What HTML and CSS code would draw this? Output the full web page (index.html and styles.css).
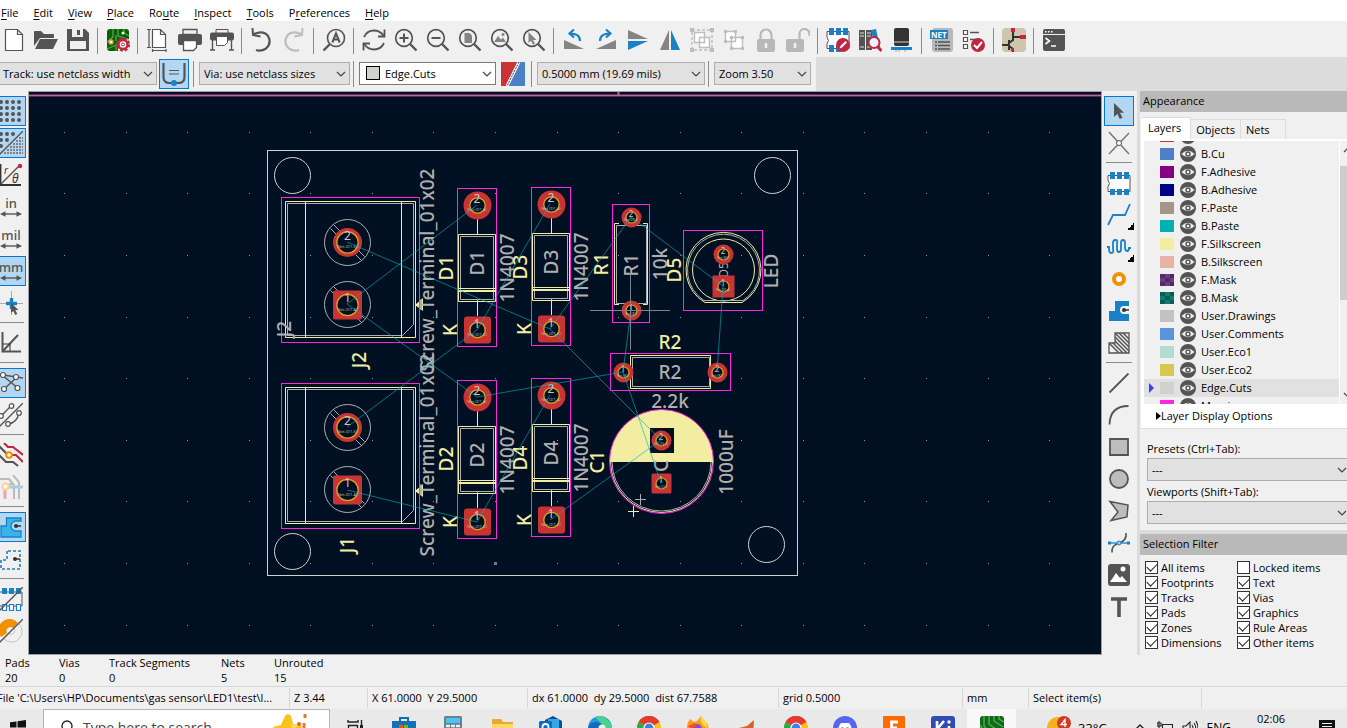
FILE: index.html
```html
<!DOCTYPE html>
<html lang="en">
<head>
<meta charset="utf-8">
<title>PCB Editor</title>
<link rel="stylesheet" href="styles.css">
</head>
<body>
<svg class="defs" aria-hidden="true">
  <defs>
    <symbol id="chev" viewBox="0 0 10 6"><path d="M1 1l4 4 4-4" fill="none" stroke="#444" stroke-width="1.2"/></symbol>
    <symbol id="lens" viewBox="0 0 24 24"><circle cx="10" cy="10" r="8.3" fill="none" stroke="#545454" stroke-width="1.7"/><path d="M16 16l6.500 6.500" stroke="#545454" stroke-width="2.400"/></symbol>
    <symbol id="eye" viewBox="0 0 16 16"><circle cx="8" cy="8" r="8" fill="#545454"/><path d="M1.500 8Q8 1.500 14.500 8Q8 14.500 1.500 8z" fill="#f0f0f0"/><circle cx="8" cy="8" r="2.700" fill="#545454"/><circle cx="8" cy="8" r="1.300" fill="#f0f0f0"/></symbol>
    <symbol id="chrome" viewBox="0 0 24 24"><circle cx="12" cy="12" r="12" fill="#fbc116"/><path d="M12 12L1.600 6A12 12 0 0 1 22.400 6z" fill="#e33b2e"/><path d="M12 12L1.600 6A12 12 0 0 0 12 24z" fill="#2da94f"/><path d="M1.600 6A12 12 0 0 1 22.400 6L12 7z" fill="#e33b2e"/><circle cx="12" cy="12" r="5.600" fill="#fff"/><circle cx="12" cy="12" r="4.400" fill="#3f7de8"/></symbol>
  </defs>
</svg>

<nav class="menubar">
  <button><u>F</u>ile</button><button><u>E</u>dit</button><button><u>V</u>iew</button><button><u>P</u>lace</button><button>Ro<u>u</u>te</button><button><u>I</u>nspect</button><button><u>T</u>ools</button><button>P<u>r</u>eferences</button><button><u>H</u>elp</button>
</nav>

<div class="toolbar">
  <button class="tool" aria-label="New"><svg viewBox="0 0 24 24"><path d="M3.500 1.500h12l5 5v16h-17zM15.500 1.500v5h5" fill="#fff" stroke="#545454" stroke-width="1.200"/></svg></button>
  <button class="tool" aria-label="Open"><svg viewBox="0 0 24 24"><path d="M0 18V4q0-1 1-1h6l3 3h9q1 0 1 1v3H6z" fill="#545454"/><path d="M6 11h18l-5 10H1z" fill="#545454"/></svg></button>
  <button class="tool" aria-label="Save"><svg viewBox="0 0 24 24"><path d="M1 1h18l4 4v18H1z" fill="#545454"/><path d="M6 1h11v8H6zM4 13h16v8H4z" fill="#f0f0f0"/><path d="M11 2h3v5h-3z" fill="#545454"/></svg></button>
  <i class="sep"></i>
  <button class="tool" aria-label="Board setup"><svg viewBox="0 0 24 24"><rect x="1" y="1" width="22" height="22" rx="3" fill="#016301"/><path d="M7 1v8L1 14M12 1v7l10 3M18 1v4l5 3M1 21l9-4v6M10 13V7" stroke="#5aa05a" stroke-width="1.300" fill="none"/><circle cx="5" cy="14" r="2" fill="#fff" stroke="#f0a020" stroke-width="1.300"/><circle cx="17" cy="5" r="1.500" fill="#fff"/><path d="M12 23V13l11-2v12z" fill="#d8e8d8"/><circle cx="17" cy="16.500" r="4.500" fill="#fff" stroke="#bf2641" stroke-width="2.500"/><circle cx="17" cy="16.500" r="6" fill="none" stroke="#bf2641" stroke-width="2.400" stroke-dasharray="2.700 2"/><circle cx="17" cy="16.500" r="1.500" fill="none" stroke="#bf2641"/></svg></button>
  <i class="sep"></i>
  <button class="tool" aria-label="Page settings"><svg viewBox="0 0 24 24"><path d="M6.500 1.500h8l5 5v13h-13zM14.500 1.500v5h5" fill="#fff" stroke="#545454" stroke-width="1.200"/><path d="M1 1.500h4M1 19.500h4M3 1.500v18M6 22.500h14M6.500 21v3M20 21v3" stroke="#545454" stroke-width="1.200"/></svg></button>
  <button class="tool" aria-label="Print"><svg viewBox="0 0 24 24"><path d="M5 1.500h14v5H5z" fill="#f0f0f0" stroke="#545454" stroke-width="1.300"/><rect y="6" width="24" height="11" rx="2" fill="#545454"/><path d="M5.500 12.500h13v7l-3 3h-10z" fill="#fff" stroke="#545454" stroke-width="1.300"/></svg></button>
  <button class="tool" aria-label="Plot"><svg viewBox="0 0 24 24"><path d="M6 1.500h12v4H6z" fill="#f0f0f0" stroke="#545454"/><rect y="4.500" width="24" height="8" rx="2" fill="#545454"/><path d="M6.500 8.500h11v6l-3 3h-8z" fill="#fff" stroke="#545454"/><path d="M2.500 12v10M21.500 12v10M0 22h5M19 22h5" stroke="#545454" stroke-width="1.400"/></svg></button>
  <i class="sep"></i>
  <button class="tool" aria-label="Undo"><svg viewBox="0 0 24 24"><path d="M3 6.500q10-5 15 1.500q4 7-2 12.500q-5 3.500-10 1.500" fill="none" stroke="#545454" stroke-width="2.200"/><path d="M2.500 0l.5 7 7.500 1.500" fill="none" stroke="#545454" stroke-width="2"/></svg></button>
  <button class="tool" aria-label="Redo"><svg viewBox="0 0 24 24"><path d="M20 6.500Q10 1.500 5 8q-4 7 2 12.500q5 3.500 10 1.500" fill="none" stroke="#bdbdbd" stroke-width="2.200"/><path d="M20.500 0l-.5 7-7.500 1.500" fill="none" stroke="#bdbdbd" stroke-width="2"/></svg></button>
  <i class="sep"></i>
  <button class="tool" aria-label="Find"><svg viewBox="0 0 24 24"><circle cx="14" cy="10" r="8.500" fill="none" stroke="#545454" stroke-width="1.600"/><path d="M8 16l-6.500 6.500" stroke="#545454" stroke-width="2.400"/><path d="M10.300 14.500l3.700-9 3.700 9M11.500 11.500h5" stroke="#545454" stroke-width="2" fill="none"/></svg></button>
  <i class="sep"></i>
  <button class="tool" aria-label="Refresh"><svg viewBox="0 0 24 24"><path d="M2 9Q5 2.500 12 2.500q6 0 10 5.500M22 15q-3 6.500-10 6.500q-6 0-10-5.500" fill="none" stroke="#545454" stroke-width="1.800"/><path d="M22.500 1.500V8.500H16M1.500 22.500V15.500H8" fill="none" stroke="#545454" stroke-width="1.800"/></svg></button>
  <button class="tool" aria-label="Zoom in"><svg viewBox="0 0 24 24"><use href="#lens"/><path d="M10 5.500v9M5.500 10h9" stroke="#545454" stroke-width="2"/></svg></button>
  <button class="tool" aria-label="Zoom out"><svg viewBox="0 0 24 24"><use href="#lens"/><path d="M5.500 10h9" stroke="#545454" stroke-width="2"/></svg></button>
  <button class="tool" aria-label="Zoom page"><svg viewBox="0 0 24 24"><use href="#lens"/><path d="M6.500 5h5l2.500 2.500V15H6.500z" fill="#848484"/></svg></button>
  <button class="tool" aria-label="Zoom objects"><svg viewBox="0 0 24 24"><use href="#lens"/><path d="M4 14l4-6 3 3.500 2-2 3 4.500z" fill="#848484"/><circle cx="13" cy="6.500" r="1.500" fill="#848484"/></svg></button>
  <button class="tool" aria-label="Zoom selection"><svg viewBox="0 0 24 24"><use href="#lens"/><path d="M6.500 4v11l2.500-2.300 2 4 2-1-2-3.700h3.500z" fill="#848484"/></svg></button>
  <i class="sep"></i>
  <button class="tool" aria-label="Rotate counterclockwise"><svg viewBox="0 0 24 24"><path d="M2 12l20 9H2z" fill="#848484"/><path d="M18 13q0-7.500-10-7.500M12 1.500L7.500 5.500l4.500 4" fill="none" stroke="#1a81c4" stroke-width="2.200"/></svg></button>
  <button class="tool" aria-label="Rotate clockwise"><svg viewBox="0 0 24 24"><path d="M22 12L2 21h20z" fill="#848484"/><path d="M6 13q0-7.500 10-7.500M12 1.500l4.500 4-4.500 4" fill="none" stroke="#1a81c4" stroke-width="2.200"/></svg></button>
  <button class="tool" aria-label="Flip vertically"><svg viewBox="0 0 24 24"><path d="M2 2l20 9H2z" fill="#848484"/><path d="M2 22l20-9H2z" fill="#1a81c4"/></svg></button>
  <button class="tool" aria-label="Flip horizontally"><svg viewBox="0 0 24 24"><path d="M2 22L11 2v20z" fill="#848484"/><path d="M22 22L13 2v20z" fill="#1a81c4"/></svg></button>
  <button class="tool" aria-label="Group"><svg viewBox="0 0 24 24"><path d="M2 2h20v20H2z" fill="none" stroke="#bdbdbd" stroke-width="1.400" stroke-dasharray="3 2"/><path d="M4.500 4.500h10v10h-10zM9.500 9.500h10v10h-10z" fill="#fff" stroke="#bdbdbd" stroke-width="1.400"/><path d="M0 0h4v4H0zM20 0h4v4h-4zM0 20h4v4H0zM20 20h4v4h-4z" fill="#bdbdbd"/></svg></button>
  <button class="tool" aria-label="Ungroup"><svg viewBox="0 0 24 24"><path d="M3.500 3.500h10v10h-10zM9.500 9.500h11v11h-11z" fill="#fff" stroke="#bdbdbd" stroke-width="1.400"/><path d="M2 2h3v3H2zM12 2h3v3h-3zM2 12h3v3H2zM8 8h3v3H8zM19 8h3v3h-3zM8 19h3v3H8zM19 19h3v3h-3z" fill="#bdbdbd"/></svg></button>
  <button class="tool" aria-label="Lock"><svg viewBox="0 0 24 24"><rect x="3" y="11" width="18" height="13" rx="2" fill="#b8b8b8"/><path d="M6.500 11V7a5.500 5.500 0 0 1 11 0v4" fill="none" stroke="#b8b8b8" stroke-width="2.200"/><path d="M12 15v5" stroke="#f0f0f0" stroke-width="2.500"/></svg></button>
  <button class="tool" aria-label="Unlock"><svg viewBox="0 0 24 24"><rect x="0" y="11" width="18" height="13" rx="2" fill="#b8b8b8"/><path d="M13.500 11V6a5 5 0 0 1 10 0v2" fill="none" stroke="#b8b8b8" stroke-width="2.200"/><path d="M9 15v5" stroke="#f0f0f0" stroke-width="2.500"/></svg></button>
  <i class="sep"></i>
  <button class="tool" aria-label="Footprint editor"><svg viewBox="0 0 24 24"><path d="M1 3.500h22v17H1v-5q3-3 0-6z" fill="#fff" stroke="#545454"/><path d="M3 0h5v7H3zM10 0h5v7h-5zM17 0h5v7h-5zM3 17h5v7H3zM10 17h5v7h-5z" fill="#1a81c4"/><circle cx="17" cy="17" r="7" fill="#bf2641"/><path d="M13.500 20.500l1-2.500 5-5 1.500 1.500-5 5z" fill="#fff"/></svg></button>
  <button class="tool" aria-label="Footprint libraries"><svg viewBox="0 0 24 24"><path d="M1 2h6v20H1zM8 2h6v20H8z" fill="#545454"/><path d="M2 5h4M2 8h4M9 5h4M9 8h4M2 19h4M9 19h4" stroke="#ddd"/><path d="M13 2l5-1 4 18-5 1z" fill="#1a81c4"/><circle cx="16" cy="14.500" r="5.500" fill="#e8f2f8" stroke="#bf2641" stroke-width="2"/><path d="M19.500 18.500l4 4.500" stroke="#bf2641" stroke-width="3"/></svg></button>
  <button class="tool" aria-label="3D viewer"><svg viewBox="0 0 24 24"><path d="M6 21v3M9 21v3M15 21v3" stroke="#bbb" stroke-width="1.400"/><rect x="4" y="0" width="15" height="18" rx="2" fill="#333"/><path d="M4 13h15v2H4z" fill="#848484"/><path d="M1 19h21v3H1z" fill="#1a81c4"/></svg></button>
  <i class="sep"></i>
  <button class="tool" aria-label="Load netlist"><svg viewBox="0 0 24 24"><rect x="2" y="0" width="21" height="24" rx="3" fill="#b8b8b8"/><path d="M0 2h18v9H0z" fill="#1a81c4"/><text x="1" y="10" class="ico-net">NET</text><path d="M5 14h2m1 0h12M5 17.500h2m1 0h12M5 21h2m1 0h12" stroke="#545454" stroke-width="1.500"/></svg></button>
  <button class="tool" aria-label="Design rules checker"><svg viewBox="0 0 24 24"><path d="M1.500 2.500h4v4h-4zM1.500 9.500h4v4h-4zM1.500 16.500h4v4h-4z" fill="#fff" stroke="#545454" stroke-width="1.200"/><path d="M8 4.500h9M8 11.500h6" stroke="#545454" stroke-width="1.300"/><circle cx="16" cy="17" r="7" fill="#bf2641"/><path d="M12 17l3 3 5-6" fill="none" stroke="#fff" stroke-width="2"/></svg></button>
  <i class="sep"></i>
  <button class="tool" aria-label="Schematic editor"><svg viewBox="0 0 24 24"><rect width="24" height="24" rx="4" fill="#d1c4ad"/><path d="M0 17h7M7 12v10M7 15l4-3V3M11 9h8M7 18l4 3v3" fill="none" stroke="#333" stroke-width="2"/><path d="M9 0h4v4H9zM18 7h6v4h-6zM9 20h3v3H9z" fill="#bf2641"/></svg></button>
  <i class="sep"></i>
  <button class="tool" aria-label="Scripting console"><svg viewBox="0 0 24 24"><rect x="1" y="1" width="22" height="22" rx="2" fill="#545454"/><path d="M1 6.500h22" stroke="#f0f0f0"/><path d="M3 3.700h1.500M6 3.700h1.500M9 3.700h1.500" stroke="#fff" stroke-width="1.500"/><path d="M3.500 10l4 3-4 3M9 18h5" fill="none" stroke="#fff" stroke-width="1.600"/></svg></button>
</div>

<div class="toolbar2">
  <div class="settings">
    <span class="combo w-track"><select aria-label="Track width"><option>Track: use netclass width</option></select><svg><use href="#chev"/></svg></span>
    <button class="tool on auto" aria-label="Automatic track width"><svg viewBox="0 0 24 24"><path d="M1.500 1v14q0 6 6 6h9q6 0 6-6V1" fill="none" stroke="#545454" stroke-width="2.200"/><path d="M7 8.500h10M7 12h10" stroke="#545454"/><circle cx="12" cy="21" r="3" fill="#1a81c4"/></svg></button>
    <i class="sep"></i>
    <span class="combo w-via"><select aria-label="Via size"><option>Via: use netclass sizes</option></select><svg><use href="#chev"/></svg></span>
    <i class="sep"></i>
    <span class="combo white w-layer"><select aria-label="Active layer"><option>Edge.Cuts</option></select><b class="swatch"></b><svg><use href="#chev"/></svg></span>
    <button class="pair" aria-label="Layer pair"><svg viewBox="0 0 24 24"><path d="M0 0h24v24H0z" fill="#4d7fc4"/><path d="M0 0h18L6 24H0z" fill="#c83434"/><path d="M18 0L6 24" stroke="#fff" stroke-width="3"/><path d="M18 0L6 24" stroke="#333" stroke-width="1" stroke-dasharray="2 1"/></svg></button>
    <i class="sep"></i>
    <span class="combo w-grid"><select aria-label="Grid"><option>0.5000 mm (19.69 mils)</option></select><svg><use href="#chev"/></svg></span>
    <i class="sep"></i>
    <span class="combo w-zoom"><select aria-label="Zoom"><option>Zoom 3.50</option></select><svg><use href="#chev"/></svg></span>
  </div>
</div>

<main class="work">
  <div class="side left">
    <button class="tool on" aria-label="Grid"><svg viewBox="0 0 24 24"><path d="M2 3h24M2 9h24M2 15h24M2 21h24" stroke="#545454" stroke-width="4" stroke-linecap="round" stroke-dasharray="0 6"/></svg></button>
    <button class="tool on" aria-label="Grid overrides"><svg viewBox="0 0 24 24"><path d="M2 3h13M2 9h7M2 15h1" stroke="#545454" stroke-width="4" stroke-linecap="round" stroke-dasharray="0 6"/><path d="M24 0L0 24" stroke="#545454" stroke-width="1.300"/><path d="M20 7h4M17 10h7M14 13h10M11 16h13M8 19h16M5 22h19" stroke="#848484" stroke-width="2" stroke-dasharray="2 1"/></svg></button>
    <button class="tool" aria-label="Polar coordinates"><svg viewBox="0 0 24 24"><path d="M1.500 1v21H22" fill="none" stroke="#333" stroke-width="1.800"/><path d="M2 21L20 3" stroke="#545454" stroke-width="1.500"/><circle cx="21" cy="3" r="2.200" fill="#bf2641"/><text x="5" y="11" class="ico-r">r</text><text x="13" y="20" class="ico-th">θ</text></svg></button>
    <button class="tool unit" aria-label="Inches"><span>in</span><svg viewBox="0 0 24 8"><path d="M3 4h18" stroke="#545454" stroke-width="1.500"/><path d="M0 4l6-3v6zM24 4l-6-3v6z" fill="#545454"/></svg></button>
    <button class="tool unit" aria-label="Mils"><span>mil</span><svg viewBox="0 0 24 8"><path d="M3 4h18" stroke="#545454" stroke-width="1.500"/><path d="M0 4l6-3v6zM24 4l-6-3v6z" fill="#545454"/></svg></button>
    <button class="tool unit on" aria-label="Millimeters"><span>mm</span><svg viewBox="0 0 24 8"><path d="M3 4h18" stroke="#545454" stroke-width="1.500"/><path d="M0 4l6-3v6zM24 4l-6-3v6z" fill="#545454"/></svg></button>
    <button class="tool" aria-label="Full crosshair"><svg viewBox="0 0 24 24"><path d="M12.500 0v24M1 12.500h23" stroke="#aaa"/><path d="M12.500 7v11M7 12.500h11" stroke="#1a81c4" stroke-width="3.400"/><path d="M12 12v10l2.300-2 2 4 2-1-2-4h3.200z" fill="#545454"/></svg></button>
    <i class="hsep"></i>
    <button class="tool" aria-label="45 degree mode"><svg viewBox="0 0 24 24"><path d="M3.500 1v19.500H22M3.500 20.500L19 4" fill="none" stroke="#545454" stroke-width="2"/><path d="M4 13h7v7" fill="none" stroke="#333"/></svg></button>
    <i class="hsep"></i>
    <button class="tool on" aria-label="Ratsnest"><svg viewBox="0 0 24 24"><path d="M3 4l17 14M4 19L18 6M4 4l20 3" stroke="#545454" stroke-width="1.500"/><g fill="#fff" stroke="#545454" stroke-width="1.200"><circle cx="4" cy="4" r="2.500"/><circle cx="17" cy="6" r="2.500"/><circle cx="5" cy="18" r="2.500"/><circle cx="18.500" cy="17" r="2.500"/></g></svg></button>
    <button class="tool" aria-label="Curved ratsnest"><svg viewBox="0 0 24 24"><path d="M0 24L24 0M3 12l9-9M9 21q9-1 11-11" fill="none" stroke="#545454" stroke-width="1.300"/><g fill="#fff" stroke="#545454" stroke-width="1.200"><circle cx="2" cy="13" r="2.300"/><circle cx="12.500" cy="3" r="2.300"/><circle cx="20" cy="10" r="2.300"/><circle cx="9" cy="21" r="2.300"/></g></svg></button>
    <i class="hsep"></i>
    <button class="tool" aria-label="High contrast"><svg viewBox="0 0 24 24"><path d="M5 0l4 4h5l10 8M12 12h5l7 7" fill="none" stroke="#bf2641" stroke-width="2.200"/><path d="M0 3l9 9M0 12l7 7h7l5 4" fill="none" stroke="#545454" stroke-width="2.200"/><circle cx="10" cy="12" r="2.800" fill="#fff" stroke="#f29100" stroke-width="2"/></svg></button>
    <button class="tool" aria-label="Net highlighting"><svg viewBox="0 0 24 24"><path d="M1 4h9l5 6v14M14 0l6 7v17M10 9h5" fill="none" stroke="#bbb" stroke-width="2"/><path d="M6 12v12" stroke="#e6a6b2" stroke-width="3"/><path d="M8 12h16" stroke="#a5cde8" stroke-width="3"/><circle cx="6.500" cy="11.500" r="3" fill="#fff" stroke="#fbd29a" stroke-width="2"/></svg></button>
    <i class="hsep"></i>
    <button class="tool on" aria-label="Zone fill"><svg viewBox="0 0 24 24"><path d="M7.500 3v8H2v11h20v-6H17a5 5 0 0 1 0-10h5V3z" fill="#39b4ea" stroke="#1a81c4" stroke-width="1.300"/><circle cx="17" cy="11" r="2" fill="#333"/><path d="M17 11h5" stroke="#333" stroke-width="1.500"/></svg></button>
    <button class="tool" aria-label="Zone outline"><svg viewBox="0 0 24 24"><path d="M8 4v9H2v9h19V4z" fill="none" stroke="#1a81c4" stroke-width="1.600" stroke-dasharray="3 2"/><circle cx="16" cy="12" r="2" fill="#333"/><path d="M16 12h5" stroke="#333" stroke-width="1.500"/></svg></button>
    <i class="hsep"></i>
    <button class="tool" aria-label="Pad outline"><svg viewBox="0 0 24 24"><path d="M0 5h23v14H0" fill="none" stroke="#545454"/><path d="M3 1h5v6H3zM10 1h5v6h-5zM17 1h5v6h-5z" fill="#1a81c4"/><path d="M3.500 17.500h4v6h-4zM10.500 17.500h4v6h-4zM17.500 17.500h4v6h-4z" fill="#fff" stroke="#1a81c4" stroke-width="1.200"/><path d="M24 0L0 24" stroke="#545454" stroke-width="1.300"/></svg></button>
    <button class="tool" aria-label="Via outline"><svg viewBox="0 0 24 24"><path d="M2 18A10 10 0 0 1 19 4l-5 5a4 4 0 0 0-6 5z" fill="#f29100"/><path d="M20 5A10 10 0 0 1 5 20M15 9a4 4 0 0 1-5 6" fill="none" stroke="#c4c4c4"/><path d="M24 0L0 24" stroke="#545454" stroke-width="1.300"/></svg></button>
  </div>

  <div class="canvas">
    <svg width="100%" height="100%">
      <defs>
        <g id="thole"><circle r="14.500" fill="#c83434"/><circle r="10.700" fill="#001023" stroke="#d9a520" stroke-width="1.300"/></g>
        <g id="tsq"><rect x="-14.500" y="-14.500" width="29" height="29" rx="2" fill="#c83434"/><circle r="10.700" fill="#001023" stroke="#d9a520" stroke-width="1.300"/></g>
        <g id="dhole"><circle r="14" fill="#c83434"/><circle r="7.700" fill="#001023" stroke="#d9a520" stroke-width="1.300"/></g>
        <g id="dsq"><rect x="-13.500" y="-13.500" width="27" height="27" rx="3" fill="#c83434"/><circle r="7.700" fill="#001023" stroke="#d9a520" stroke-width="1.300"/></g>
        <g id="rhole"><circle r="10" fill="#c83434"/><circle r="5.500" fill="#001023" stroke="#d9a520" stroke-width="1.200"/></g>
        <g id="rsq"><rect x="-10" y="-10" width="20" height="20" rx="1.500" fill="#c83434"/><circle r="5.500" fill="#001023" stroke="#d9a520" stroke-width="1.200"/></g>
        <g id="lsq"><rect x="-11" y="-11" width="22" height="22" fill="#c83434"/><circle r="5.500" fill="#001023" stroke="#d9a520" stroke-width="1.200"/></g>
        <g id="lugs" class="fab"><circle r="23"/><path d="M-17 -14l6 6M-14 -18l6 6M17 14l-6-6M14 18l-6-6"/></g>
        <g id="terminal">
          <path class="fab" d="M287.500 203.500h126v121l-11 11h-115z"/>
          <path class="silk" d="M285.500 201.500h130v136h-130zM305.500 201.500v136M401.500 201.500v136"/>
          <path class="silkfill" d="M415 305l8-7v13z"/>
          <rect class="sel" x="281.500" y="197.500" width="138" height="145"/>
        </g>
        <g id="termpads">
          <use href="#lugs" x="347.500" y="242.500"/><use href="#lugs" x="347.500" y="304.500"/>
          <use href="#thole" x="347.500" y="242.500"/><use href="#tsq" x="347.500" y="305"/>
          <text class="num" x="347.500" y="240">2</text><text class="num" x="347.500" y="302">1</text>
          <text class="net" x="347.500" y="248">Net-(D1-K)</text><text class="net" x="347.500" y="311">Net-(D1-A)</text>
        </g>
        <g id="diode">
          <path class="fab" d="M460.500 236.500h33v63h-33zM477.500 300v8"/>
          <path class="silk" d="M458.500 234.500h37v67h-37zM458.500 288.500h37M458.500 291.500h37M458.500 290.500h37M477.500 219v15M477.500 301v15"/>
          <use href="#dhole" x="477.500" y="205.500"/><use href="#dsq" x="477.500" y="330"/>
          <text class="num" x="477" y="203">2</text><text class="num" x="477" y="328">1</text>
          <text class="net" x="477" y="211">Net-(D1-A)</text><text class="net" x="477" y="336">Net-(D1-K)</text>
          <rect class="sel" x="457.500" y="188.500" width="39" height="158"/>
          <text class="pcb s" transform="translate(457 330) rotate(-90)">K</text>
          <text class="pcb" transform="translate(514 268) rotate(-90)">1N4007</text>
        </g>
      </defs>
      <g transform="translate(-29 -92)">
        <path class="dots" d="M64 132.500H1400M64 193.500H1400M64 255.500H1400M64 317.500H1400M64 378.500H1400M64 440.500H1400M64 501.500H1400M64 563.500H1400M64 625.500H1400"/>
        <path d="M494 562.500h3M494 563.500h3M494 564.500h3" stroke="#777"/>
        <path d="M29 95.500H1400" stroke="#5e2a5a" stroke-width="3"/><path d="M29 95.500H1400" stroke="#b468a4"/>
        <path d="M618.500 92v4" stroke="#c4689c" stroke-width="2"/>
        <rect class="edge" x="267.500" y="150.500" width="530" height="425"/>
        <g class="edge"><circle cx="292.500" cy="175.500" r="18"/><circle cx="772.500" cy="175.500" r="18"/><circle cx="292.500" cy="551.500" r="18"/><circle cx="766.500" cy="544.500" r="18"/></g>

        <use href="#terminal"/><use href="#termpads"/>
        <use href="#terminal" y="186"/><use href="#termpads" y="185"/>
        <use href="#diode"/><use href="#diode" x="74" y="-1"/><use href="#diode" y="192"/><use href="#diode" x="74" y="190"/>

        <path class="fab" d="M616.500 225.500h30v78h-30z"/>
        <path class="silk" d="M619 223.500h-4.500v81h4.500M643 223.500h4.500v81h-4.500"/>
        <use href="#rhole" x="631.500" y="217.500"/><use href="#rhole" x="631.500" y="310.500"/>
        <rect class="sel" x="612.500" y="204.500" width="37" height="118"/>

        <path class="fab" d="M632.500 357.500h77v29h-77z"/><path class="silk" d="M630.500 355.500h80v33h-80z"/>
        <use href="#rhole" x="623.500" y="372.500"/><use href="#rhole" x="717.500" y="372.500"/>
        <rect class="sel" x="610.500" y="353.500" width="120" height="37"/>

        <path class="silk" d="M705 302.500A37.500 37.500 0 1 1 742 302.500z"/><circle class="silk" cx="723.500" cy="270" r="31"/>
        <path class="fab" d="M704 300.500A36 36 0 1 1 743 300.500z"/>
        <text class="ref-in" transform="translate(728 270) rotate(-90)">D5</text>
        <use href="#rhole" x="723.500" y="254.500"/><use href="#lsq" x="723.500" y="286.500"/>
        <rect class="sel" x="683.500" y="230.500" width="79" height="80"/>

        <circle class="silk" cx="661.500" cy="461.500" r="51"/><circle class="fab" cx="661.500" cy="461.500" r="49.500"/>
        <path class="silkfill" d="M609.500 462a52 52 0 0 1 104 0z"/>
        <circle class="sel" cx="661.500" cy="461.500" r="52"/>
        <path d="M650 428h24v25h-24z" fill="#001023"/>
        <text class="pcb" transform="translate(668 466) rotate(-90)">C</text>
        <use href="#rhole" x="661.500" y="440.500"/><use href="#rsq" x="661.500" y="483.500"/>
        <path class="fab" d="M635 499.500h11M640.500 494v11"/><path class="silk" d="M628 511.500h11M633.500 506v11"/>

        <g class="numr">
          <text x="631" y="217">2</text><text x="631" y="311">1</text><text x="623" y="372">1</text><text x="717" y="372">2</text><text x="723" y="254">2</text><text x="723" y="286">1</text><text x="661" y="440">2</text><text x="661" y="483">1</text>
        </g>
        <g class="netr">
          <text x="631" y="221">Net-(D3-K)</text><text x="631" y="315">Net-(R1)</text><text x="623" y="377">Net-(R1)</text><text x="717" y="377">Net-(R2)</text><text x="723" y="259">Net-(R2)</text><text x="723" y="291">Net-(D5-A)</text><text x="661" y="445">Net-(D4-K)</text><text x="661" y="488">Net-(C1)</text>
        </g>

        <g class="pcb">
          <text transform="translate(484 263) rotate(-90)">D1</text>
          <text transform="translate(558 262) rotate(-90)">D3</text>
          <text transform="translate(484 455) rotate(-90)">D2</text>
          <text transform="translate(558 453) rotate(-90)">D4</text>
          <text transform="translate(638 265) rotate(-90)">R1</text>
          <text transform="translate(667 264) rotate(-90)">10k</text>
          <text transform="translate(778 271) rotate(-90)">LED</text>
          <text transform="translate(733 462) rotate(-90)">1000uF</text>
          <text transform="translate(291 329) rotate(-90)">J2</text>
          <text x="670" y="379">R2</text><text x="670" y="408">2.2k</text>
          <text transform="translate(434 270) rotate(-90)">Screw_Terminal_01x02</text>
          <text transform="translate(434 455) rotate(-90)">Screw_Terminal_01x02</text>
        </g>
        <g class="pcb s">
          <text transform="translate(453 268) rotate(-90)">D1</text>
          <text transform="translate(527 267) rotate(-90)">D3</text>
          <text transform="translate(453 459) rotate(-90)">D2</text>
          <text transform="translate(527 458) rotate(-90)">D4</text>
          <text transform="translate(608 264) rotate(-90)">R1</text>
          <text transform="translate(681 270) rotate(-90)">D5</text>
          <text transform="translate(604 462) rotate(-90)">C1</text>
          <text transform="translate(366 360) rotate(-90)">J2</text>
          <text transform="translate(354 545) rotate(-90)">J1</text>
          <text x="670" y="349">R2</text>
        </g>
        <path class="rats" d="M347 304L477 205M347 242L550 329M347 304L477 397M347 427L477 330M477 330L550 204M347 490L477 522M477 522L550 395M477 397L623 372M550 329L631 217M550 329L661 440M550 520L661 440M631 217L723 286M631 310L623 372M623 372L661 483M723 286L717 372"/>
        <path d="M590 310.500h80M630.500 270v80" stroke="#7d848c"/>
      </g>
    </svg>
  </div>

  <div class="side right">
    <button class="tool on" aria-label="Select"><svg viewBox="0 0 24 24"><path d="M7 4v14l3.300-3 2.500 5 2.700-1.300-2.500-5H17z" fill="#545454"/></svg></button>
    <button class="tool" aria-label="Local ratsnest"><svg viewBox="0 0 24 24"><path d="M2 1l20 22M22 2L2 23" stroke="#707070" stroke-width="1.300"/><circle cx="12" cy="12" r="2.500" fill="#fff" stroke="#545454"/></svg></button>
    <i class="hsep"></i>
    <button class="tool" aria-label="Add footprint"><svg viewBox="0 0 24 24"><path d="M1 4.500h22v16H1v-5q3-3 0-6z" fill="#fff" stroke="#545454"/><path d="M3 1h5v7H3zM10 1h5v7h-5zM17 1h5v7h-5zM3 18h5v6H3zM10 18h5v6h-5zM17 18h5v6h-5z" fill="#1a81c4"/></svg></button>
    <button class="tool more" aria-label="Route tracks"><svg viewBox="0 0 24 24"><path d="M1 22L6 12h12L23 1" fill="none" stroke="#1a81c4" stroke-width="1.800"/></svg></button>
    <button class="tool more" aria-label="Tune length"><svg viewBox="0 0 24 24"><path d="M0 12h2v2q0 4 2.500 4T6 14V8q0-3 2.500-3T10 8v6q0 3 2 3t2-3V8q0-3 2-3t2 3v4q0 4 2 4t2-3h2" fill="none" stroke="#1a81c4" stroke-width="1.800"/></svg></button>
    <button class="tool" aria-label="Add via"><svg viewBox="0 0 24 24"><circle cx="12" cy="12" r="5" fill="#fff" stroke="#f29100" stroke-width="4"/></svg></button>
    <button class="tool" aria-label="Add zone"><svg viewBox="0 0 24 24"><path d="M2 22V12h6V2h14v5h-5a4 4 0 0 0 0 8h5v7z" fill="#1a81c4"/><circle cx="17" cy="11" r="2" fill="#333"/><path d="M17 11h5" stroke="#333" stroke-width="1.500"/></svg></button>
    <button class="tool" aria-label="Add rule area"><svg viewBox="0 0 24 24"><clipPath id="ra"><path d="M2 22V12h6V2h14v20z"/></clipPath><path clip-path="url(#ra)" d="M-8 2l20 20M-4 2l20 20M0 2l20 20M4 2l20 20M8 2l20 20M12 2l20 20M16 2l20 20" stroke="#545454" stroke-width="1.500"/><path d="M2 22V12h6V2h14v20z" fill="none" stroke="#545454" stroke-width="1.300"/></svg></button>
    <i class="hsep"></i>
    <button class="tool" aria-label="Line"><svg viewBox="0 0 24 24"><path d="M2.500 21.500l19-19" stroke="#545454" stroke-width="1.800"/></svg></button>
    <button class="tool" aria-label="Arc"><svg viewBox="0 0 24 24"><path d="M2.500 21.500Q3 3 21.500 3" fill="none" stroke="#545454" stroke-width="1.800"/></svg></button>
    <button class="tool" aria-label="Rectangle"><svg viewBox="0 0 24 24"><path d="M3 4h18v16H3z" fill="#bdbdbd" stroke="#545454" stroke-width="1.800"/></svg></button>
    <button class="tool" aria-label="Circle"><svg viewBox="0 0 24 24"><circle cx="12" cy="12" r="9" fill="#bdbdbd" stroke="#545454" stroke-width="1.800"/></svg></button>
    <button class="tool" aria-label="Polygon"><svg viewBox="0 0 24 24"><path d="M3 2.500L21 6l-1 12L4 21.500 11 13z" fill="#bdbdbd" stroke="#545454" stroke-width="1.500"/></svg></button>
    <button class="tool" aria-label="Bezier curve"><svg viewBox="0 0 24 24"><path d="M5 21.500q-1-7 7-9.500t7-10" fill="none" stroke="#545454" stroke-width="1.600"/><path d="M2 12h20" stroke="#1a81c4" stroke-width="1.300"/><path d="M1 10.500h3v3H1zM20 10.500h3v3h-3z" fill="#1a81c4"/><circle cx="12" cy="12" r="2" fill="#9cd0f0" stroke="#1a81c4"/></svg></button>
    <button class="tool" aria-label="Image"><svg viewBox="0 0 24 24"><rect x="1" y="1" width="22" height="22" rx="3" fill="#545454"/><path d="M3 19l6-9 4 5 2-2 5 6z" fill="#fff"/><circle cx="16" cy="6" r="2.500" fill="#fff"/></svg></button>
    <button class="tool" aria-label="Text"><svg viewBox="0 0 24 24"><path d="M4 4h16M12 4v18" stroke="#545454" stroke-width="3.600"/></svg></button>
  </div>

  <aside class="panels">
    <section class="appearance">
      <h2>Appearance</h2>
      <div class="tabs"><button class="active">Layers</button><button>Objects</button><button>Nets</button></div>
      <div class="page">
        <div class="listwrap">
          <ul class="layers">
            <li><b style="background:#c83434"></b><svg><use href="#eye"/></svg>F.Cu</li>
            <li><b style="background:#4d7fc4"></b><svg><use href="#eye"/></svg>B.Cu</li>
            <li><b style="background:#840084"></b><svg><use href="#eye"/></svg>F.Adhesive</li>
            <li><b style="background:#000084"></b><svg><use href="#eye"/></svg>B.Adhesive</li>
            <li><b style="background:#a5948c"></b><svg><use href="#eye"/></svg>F.Paste</li>
            <li><b style="background:#00b0b0"></b><svg><use href="#eye"/></svg>B.Paste</li>
            <li><b style="background:#f2eda1"></b><svg><use href="#eye"/></svg>F.Silkscreen</li>
            <li><b style="background:#e8b2a7"></b><svg><use href="#eye"/></svg>B.Silkscreen</li>
            <li><b class="check fm"></b><svg><use href="#eye"/></svg>F.Mask</li>
            <li><b class="check bm"></b><svg><use href="#eye"/></svg>B.Mask</li>
            <li><b style="background:#c2c2c2"></b><svg><use href="#eye"/></svg>User.Drawings</li>
            <li><b style="background:#5994dc"></b><svg><use href="#eye"/></svg>User.Comments</li>
            <li><b style="background:#b4dbd2"></b><svg><use href="#eye"/></svg>User.Eco1</li>
            <li><b style="background:#d8c852"></b><svg><use href="#eye"/></svg>User.Eco2</li>
            <li class="current"><b style="background:#d0d2cd"></b><svg><use href="#eye"/></svg>Edge.Cuts</li>
            <li><b style="background:#ff26e2"></b><svg><use href="#eye"/></svg>Margin</li>
          </ul>
          <div class="scroll"><svg class="up"><use href="#chev"/></svg><i></i><svg class="down"><use href="#chev"/></svg></div>
        </div>
        <button class="disclose">Layer Display Options</button>
      </div>
      <div class="presets">
        <label for="preset">Presets (Ctrl+Tab):</label>
        <span class="combo"><select id="preset"><option>---</option></select><svg><use href="#chev"/></svg></span>
        <label for="viewport">Viewports (Shift+Tab):</label>
        <span class="combo"><select id="viewport"><option>---</option></select><svg><use href="#chev"/></svg></span>
      </div>
    </section>
    <section class="filter">
      <h2>Selection Filter</h2>
      <div class="checks">
        <label><input type="checkbox" checked>All items</label><label><input type="checkbox">Locked items</label>
        <label><input type="checkbox" checked>Footprints</label><label><input type="checkbox" checked>Text</label>
        <label><input type="checkbox" checked>Tracks</label><label><input type="checkbox" checked>Vias</label>
        <label><input type="checkbox" checked>Pads</label><label><input type="checkbox" checked>Graphics</label>
        <label><input type="checkbox" checked>Zones</label><label><input type="checkbox" checked>Rule Areas</label>
        <label><input type="checkbox" checked>Dimensions</label><label><input type="checkbox" checked>Other items</label>
      </div>
    </section>
  </aside>
</main>

<dl class="messages">
  <div><dt>Pads</dt><dd>20</dd></div><div><dt>Vias</dt><dd>0</dd></div><div><dt>Track Segments</dt><dd>0</dd></div><div><dt>Nets</dt><dd>5</dd></div><div><dt>Unrouted</dt><dd>15</dd></div>
</dl>

<footer class="status">
  <span class="file">File 'C:\Users\HP\Documents\gas sensor\LED1\test\l...</span><span>Z 3.44</span><span>X 61.0000&nbsp; Y 29.5000</span><span>dx 61.0000&nbsp; dy 29.5000&nbsp; dist 67.7588</span><span>grid 0.5000</span><span>mm</span><span>Select item(s)</span><span></span>
</footer>

<div class="taskbar">
  <div class="taskrow">
    <button class="start" aria-label="Start"><svg viewBox="0 0 16 16"><path d="M0 2.300L6.500 1.400V7.500H0zM7.500 1.200L16 0v7.500H7.500zM0 8.500h6.500v6.200L0 13.700zM7.500 8.500H16V16l-8.500-1.200z" fill="#111"/></svg></button>
    <label class="search"><svg viewBox="0 0 16 16"><circle cx="9" cy="6" r="5" fill="none" stroke="#222" stroke-width="1.300"/><path d="M5.500 9.500L1 15" stroke="#222" stroke-width="1.300"/></svg><input type="text" placeholder="Type here to search" aria-label="Search"><svg class="art" viewBox="0 0 48 32"><path d="M14 4q3-4 6 0l2 8 8 1q2 3-4 9l2 10-13-4-12 4 2-11-3-6 8-2z" fill="#fcc21b"/><path d="M17 3l3 9 10 1-9 4z" fill="#ffd95a"/><circle cx="28" cy="12" r="2" fill="#d9682a"/><path d="M34 2v4M33 11v9" stroke="#e07a2c" stroke-width="3"/></svg></label>
    <button class="task" aria-label="Task view"><svg class="small" viewBox="0 0 20 20"><path d="M3.500 7.500h9v6h-9zM3 2v2h10V2M3 19v-2h10v2M16.500 2v17" fill="none" stroke="#222" stroke-width="1.400"/><path d="M15 7h3v3h-3z" fill="#222"/></svg></button>
    <button class="task" aria-label="Store"><svg viewBox="0 0 24 24"><path d="M8 6V2h8v4" fill="none" stroke="#0d6fb8" stroke-width="2"/><path d="M0 5h24v19H0z" fill="#1672b8"/><path d="M7 9h4v4H7z" fill="#f25022"/><path d="M12 9h4v4h-4z" fill="#7fba00"/></svg></button>
    <button class="task" aria-label="Calculator"><svg viewBox="0 0 24 24"><rect x="3" width="18" height="24" rx="1.500" fill="#6f7f8c"/><path d="M5 2h14v5H5z" fill="#48c5f0"/><path d="M5 10h4M10 10h4M15 10h4M5 14h4M10 14h4" stroke="#e8eef2" stroke-width="2.500"/></svg></button>
    <button class="task" aria-label="Files"><svg viewBox="0 0 24 24"><path d="M2 3h9l2 3h10v16H2z" fill="#e8ab32"/><path d="M2 8h21v14H2z" fill="#ffd869"/></svg></button>
    <button class="task" aria-label="Outlook"><svg viewBox="0 0 24 24"><path d="M6 4l8-4 9 5v16H6z" fill="#0a4d92"/><path d="M9 3h11v9H9z" fill="#2da8e8"/><rect y="5" width="13" height="13" rx="1.500" fill="#0f6cbd"/><circle cx="6.500" cy="11" r="3" fill="none" stroke="#fff" stroke-width="1.800"/></svg></button>
    <button class="task" aria-label="Edge"><svg viewBox="0 0 24 24"><circle cx="12" cy="12" r="12" fill="#1c9be0"/><path d="M7 1Q13-2 20 4q4 4 4 8q-2 5-9 4q2-6-2-9q-3-3-6-6z" fill="#4fd08c"/><path d="M0 13Q1 6 8 6q6 0 7 6q-6-2-8 4q-4 1-7-3z" fill="#1568b8"/><circle cx="14" cy="12" r="3.500" fill="#e8f4f8"/></svg></button>
    <button class="task" aria-label="Chrome"><svg><use href="#chrome"/></svg></button>
    <button class="task" aria-label="Firefox"><svg viewBox="0 0 24 24"><path d="M4 3l4 3 3-1 4-5q2 4 5 6q3 4 3 9a11 9 0 0 1-22 0Q0 8 4 3z" fill="#ff9a1f"/><path d="M15 0q2 4 5 6l2 7-5-4q-4-4-2-9z" fill="#ffdb3a"/><circle cx="11" cy="13" r="5" fill="#7a4fd0"/><path d="M2 10l7-3 2 3-6 3z" fill="#f0502c"/></svg></button>
    <button class="task" aria-label="MATLAB"><svg viewBox="0 0 24 24"><path d="M4 12l8-2 7-6-1 17-6-5z" fill="#d9622b"/></svg></button>
    <button class="task" aria-label="Chrome profile"><svg><use href="#chrome"/></svg></button>
    <button class="task" aria-label="Discord"><svg viewBox="0 0 24 24"><circle cx="12" cy="12" r="12" fill="#5865f2"/><path d="M5 16q0-6 3-9h8q3 3 3 9l-4 2h-6z" fill="#fff"/><circle cx="9.500" cy="13" r="1.700" fill="#5865f2"/><circle cx="14.500" cy="13" r="1.700" fill="#5865f2"/></svg></button>
    <button class="task" aria-label="Fusion"><svg viewBox="0 0 24 24"><rect x="1" width="22" height="24" rx="1" fill="#ff6b00"/><path d="M9.500 19V6H16M9.500 12H15" fill="none" stroke="#fff" stroke-width="2.800"/></svg></button>
    <button class="task" aria-label="KiCad"><svg viewBox="0 0 24 24"><rect width="24" height="24" rx="3" fill="#314cb0"/><path d="M6 5v14M13 5l-6 7 6 7M18 10v9" fill="none" stroke="#fff" stroke-width="2.600"/><circle cx="18" cy="6" r="1.700" fill="#fff"/></svg></button>
    <button class="task open" aria-label="PCB editor"><svg viewBox="0 0 24 24"><rect width="24" height="24" rx="3" fill="#0c6b16"/><path d="M4 0v10l5 6M9 0v8l8 6M14 0v5l9 6M19 0v3l5 3M0 9l6 9" fill="none" stroke="#58a85c" stroke-width="1.400"/></svg></button>
    <div class="tray">
      <button class="weather"><svg viewBox="0 0 26 24"><circle cx="11" cy="12" r="11" fill="#f5b21a"/><circle cx="17" cy="7" r="7" fill="#d13b24"/><path d="M18 11V3.500l-4 5h6" fill="none" stroke="#fff" stroke-width="1.300"/></svg>33°C</button>
      <svg class="st" viewBox="0 0 16 16"><path d="M3 10l5-5 5 5" fill="none" stroke="#222" stroke-width="1.400"/></svg>
      <svg class="st" viewBox="0 0 16 16"><path d="M5.500 4.500h10v7h-10zM2 1v5M0 3h4v3H0zM2 6v6h4" fill="none" stroke="#222" stroke-width="1.100"/></svg>
      <svg class="st" viewBox="0 0 16 16"><path d="M1 6h3l4-4v12l-4-4H1zM10 5q2 3 0 6M12 3q3.500 5 0 10M14 1q4 7 0 14" fill="none" stroke="#222" stroke-width="1.100"/></svg>
      <span class="lang">ENG</span>
      <span class="clock"><time>02:06</time></span>
      <svg class="note" viewBox="0 0 16 16"><path d="M0 0h16v12h-5l-3 4v-4H0z" fill="#111"/><path d="M3 3.500h10M3 6.500h10" stroke="#eee" stroke-width="1.200"/></svg>
    </div>
  </div>
</div>
</body>
</html>
```
FILE: styles.css
```css
* { box-sizing: border-box; }
body {
  margin: 0;
  height: 100vh;
  display: flex;
  flex-direction: column;
  overflow: hidden;
  background: #f0f0f0;
  color: #000;
  font: 11px/16px "Open Sans", "Noto Sans", sans-serif;
}
button, select, input { font: inherit; color: inherit; margin: 0; padding: 0; border: 0; background: none; }
svg { display: block; flex: none; }
.defs { position: absolute; width: 0; height: 0; }

.menubar { flex: none; display: flex; gap: 15px; height: 21px; padding: 4px 1px 0; background: #fff; }
.menubar button { height: 18px; }
.menubar u { text-underline-offset: 2px; }

.toolbar { flex: none; display: flex; height: 36px; padding-top: 3px; margin-left: -2px; }
.tool { flex: none; width: 32px; height: 32px; display: flex; align-items: center; justify-content: center; }
.tool svg { width: 24px; height: 24px; }
.sep { flex: none; width: 8px; height: 26px; align-self: center; background: linear-gradient(#8c8c8c, #8c8c8c) 3px 0 / 1px 100% no-repeat; }
.ico-net { font: 700 8px "Open Sans", sans-serif; fill: #fff; }

.toolbar2 { flex: none; height: 34px; background: #dcdcdc; display: flex; }
.settings { display: flex; align-items: center; width: 816px; padding-bottom: 1px; background: #f0f0f0; }
.settings .sep { width: 9px; }
.tool.on { border: 1px solid #0078d7; background: #b3d7f3; }
.settings .auto { width: 30px; height: 30px; margin: 0 1px 0 2px; }
.combo { position: relative; display: block; height: 23px; flex: none; }
.combo select { appearance: none; width: 100%; height: 100%; border: 1px solid #adadad; background: #e1e1e1; padding: 0 20px 0 4px; border-radius: 0; }
.combo svg { position: absolute; right: 4px; top: 9px; width: 10px; height: 6px; pointer-events: none; }
.combo.white select { background: #fff; border-color: #7a7a7a; padding-left: 25px; }
.swatch { position: absolute; left: 7px; top: 4px; width: 14px; height: 14px; border: 1px solid #000; background: #d0d2cd; }
.w-track { width: 159px; margin-left: -2px; }
.w-via { width: 151px; }
.w-layer { width: 137px; }
.w-grid { width: 168px; }
.w-zoom { width: 97px; }
.pair { margin: 0 3px 0 5px; }
.pair svg { width: 24px; height: 24px; }

.work { flex: 1; min-height: 0; display: flex; background: #dcdcdc; }
.side { flex: none; display: flex; flex-direction: column; background: #f0f0f0; padding-top: 5px; overflow: hidden; }
.side .tool { width: 30px; height: 30px; margin-bottom: 2px; }
.side.left { width: 28px; }
.side.left > * { margin-left: -4px; }
.side.right { width: 35px; padding-left: 2px; }
.hsep { flex: none; width: 26px; height: 1px; margin: 2px 0 5px 2px; background: #8c8c8c; }
.side.left .hsep { margin-left: -2px; }
.side .unit { flex-direction: column; font: 500 13px/14px "Noto Sans", sans-serif; color: #545454; }
.unit svg { width: 22px; height: 8px; }
.ico-r { font: italic 10px "Noto Sans", sans-serif; fill: #333; }
.ico-th { font: italic 12px "Noto Sans", sans-serif; fill: #333; }
.more { background: linear-gradient(135deg, transparent 50%, #000 50%) right bottom / 7px 7px no-repeat; }

.canvas { flex: 1; min-width: 0; border: 1px solid #a0a0a0; background: #001023; overflow: hidden; }
.dots { stroke: #999; stroke-dasharray: 1 60.57; shape-rendering: crispEdges; }
.edge { fill: none; stroke: #d0d2cd; }
.fab { fill: none; stroke: #afafaf; }
.silk { fill: none; stroke: #f2eda1; }
.silkfill { fill: #f2eda1; }
.sel { fill: none; stroke: #ff26e2; }
.rats { fill: none; stroke: #00b4c0; stroke-opacity: .6; }
.pcb { font: 500 19px "Noto Sans", sans-serif; fill: #afafaf; text-anchor: middle; }
.pcb.s { fill: #f2eda1; }
.ref-in { font: 12px "Noto Sans", sans-serif; fill: #afafaf; text-anchor: middle; }
.num { font: 12px "Noto Sans", sans-serif; fill: #d0c4c6; text-anchor: middle; }
.net { font: 4px "Noto Sans", sans-serif; fill: #bbb; text-anchor: middle; }
.numr { font: 8px "Noto Sans", sans-serif; fill: #d0c4c6; text-anchor: middle; }
.netr { font: 3px "Noto Sans", sans-serif; fill: #bbb; text-anchor: middle; }

.panels { flex: none; width: 207px; margin-left: 3px; display: flex; flex-direction: column; overflow: hidden; }
.panels h2 { margin: 0; height: 21px; padding: 0 3px; background: #b9b9b9; font: inherit; line-height: 20px; }
.appearance { background: #f0f0f0; flex: none; height: 439px; margin-bottom: 4px; }
.tabs { display: flex; align-items: flex-end; height: 27px; padding: 5px 1px 0; }
.tabs button { height: 20px; border: 1px solid #dcdcdc; border-left: 0; border-bottom: 0; padding: 0 15px 0 5px; }
.tabs button:nth-child(2) { padding-right: 5px; }
.tabs .active { height: 22px; padding: 0 9px 2px 7px; background: #fff; }
.page { margin-left: 1px; background: #fff; padding-top: 2px; border-bottom: 1px solid #dcdcdc; }
.listwrap { display: flex; height: 263px; margin-left: 3px; overflow: hidden; }
.layers { flex: 1; list-style: none; margin: -14px 1px 0 0; padding: 0; background: #f0f0f0; }
.layers li { display: flex; align-items: center; height: 18px; padding-left: 16px; position: relative; }
.layers b { width: 14px; height: 12px; margin-right: 6px; }
.layers svg { width: 16px; height: 16px; margin-right: 5px; }
.check { background: repeating-conic-gradient(var(--a) 0 25%, var(--b) 0 50%) 0 0 / 10px 8px; }
.fm { --a: #6a3f7c; --b: #542a66; }
.bm { --a: #147a70; --b: #045e58; }
.layers .current { background: #e1e1e1; }
.current::before { content: ""; position: absolute; left: 5px; top: 4px; border: 5px solid transparent; border-left-color: #3b3bff; border-right: 0; }
.scroll { width: 7px; display: flex; flex-direction: column; background: #f0f0f0; overflow: hidden; }
.scroll svg { width: 10px; height: 6px; margin-left: 3px; }
.scroll .up { transform: rotate(180deg); margin-top: 6px; }
.scroll i { height: 134px; margin: 13px 0 92px; background: #cdcdcd; flex: none; }
.disclose { display: flex; align-items: center; height: 24px; padding-left: 15px; }
.disclose::before { content: ""; border: 4px solid transparent; border-left: 5px solid #000; border-right: 0; }
.presets { padding: 12px 0 0 7px; }
.presets label { display: block; height: 17px; line-height: 16px; }
.presets .combo { margin: 0 -8px 3px 0; }
.presets .combo svg { right: 8px; }

.filter { flex: 1; background: #f0f0f0; }
.checks { display: grid; grid-template-columns: 92px 1fr; padding: 5px 0 0 5px; }
.checks label { display: flex; align-items: center; gap: 3px; height: 15px; }
.checks input { appearance: none; width: 13px; height: 13px; border: 1px solid #333; background: #fff; display: grid; place-items: center; }
.checks input:checked::before { content: ""; width: 9px; height: 5px; border: 1px solid #222; border-top: 0; border-right: 0; transform: rotate(-45deg); margin-bottom: 3px; }

.messages { flex: none; margin: 0; height: 32px; padding: 0 5px; display: grid; grid-template-columns: 54px 50px 112px 53px 1fr; border-bottom: 1px solid #d7d7d7; line-height: 15px; }
.messages dd { margin: 0; }

.status { flex: none; display: flex; height: 22px; align-items: center; white-space: nowrap; }
.status span { flex: none; width: 78px; padding: 0 4px; line-height: 20px; height: 20px; border-right: 1px solid #d7d7d7; }
.status .file { width: 293px; padding-left: 0; margin-left: -3px; overflow: hidden; }
.status span:nth-child(3) { width: 160px; }
.status span:nth-child(4) { width: 251px; }
.status span:nth-child(5) { width: 184px; }
.status span:nth-child(6) { width: 66px; }
.status span:nth-child(7) { width: 173px; }
.status span:nth-child(8) { flex: 1; border: 0; }

.taskbar { flex: none; height: 19px; overflow: hidden; background: #e9e9ea; }
.taskrow { display: flex; height: 38px; }
.start { width: 43px; padding-left: 10px; display: flex; align-items: center; }
.start svg { width: 16px; height: 16px; }
.search { display: flex; align-items: center; width: 287px; padding-left: 14px; border: 1px solid #b5b5b5; background: #fff; }
.search svg { width: 16px; height: 16px; }
.search input { flex: 1; min-width: 0; margin-left: 9px; font-size: 14px; }
.search input::placeholder { color: #444; opacity: 1; }
.search .art { width: 48px; height: 32px; margin-right: 10px; }
.task { width: 49px; display: flex; align-items: center; justify-content: center; }
.task svg { width: 24px; height: 24px; }
.task .small { width: 20px; height: 20px; }
.task.open { background: #f8f8f8; }
.tray { flex: 1; display: flex; align-items: center; padding: 0 12px 0 31px; }
.weather { display: flex; align-items: center; gap: 5px; font-size: 13px; margin-right: auto; }
.weather svg { width: 26px; height: 24px; }
.st { width: 16px; height: 16px; margin-right: 9px; }
.lang { margin-right: 26px; font-size: 12px; }
.clock { align-self: flex-start; padding-top: 2px; margin-right: 34px; }
.note { width: 16px; height: 16px; }
```
